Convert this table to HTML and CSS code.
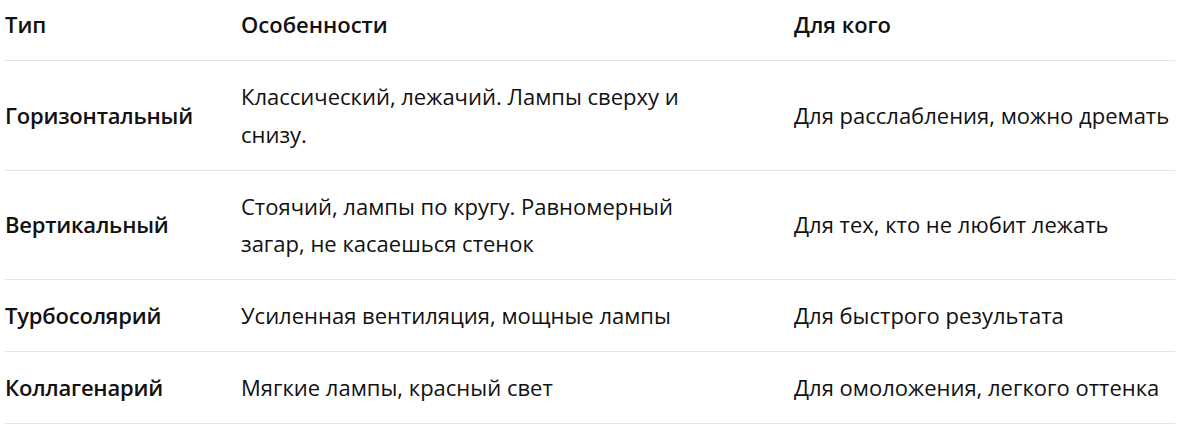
FILE: index.html
```html
<!DOCTYPE html>
<html lang="ru">
<head>
<meta charset="utf-8">
<link rel="stylesheet" href="styles.css">
</head>
<body>
<table class="tbl">
  <thead>
    <tr>
      <th class="c1">Тип</th>
      <th class="c2">Особенности</th>
      <th class="c3">Для кого</th>
    </tr>
  </thead>
  <tbody>
    <tr>
      <td class="c1 name">Горизонтальный</td>
      <td class="c2"><span class="wrap">Классический, лежачий. Лампы сверху и снизу.</span></td>
      <td class="c3">Для расслабления, можно дремать</td>
    </tr>
    <tr>
      <td class="c1 name">Вертикальный</td>
      <td class="c2"><span class="wrap">Стоячий, лампы по кругу. Равномерный загар, не касаешься стенок</span></td>
      <td class="c3">Для тех, кто не любит лежать</td>
    </tr>
    <tr>
      <td class="c1 name">Турбосолярий</td>
      <td class="c2"><span class="wrap">Усиленная вентиляция, мощные лампы</span></td>
      <td class="c3">Для быстрого результата</td>
    </tr>
    <tr>
      <td class="c1 name">Коллагенарий</td>
      <td class="c2"><span class="wrap">Мягкие лампы, красный свет</span></td>
      <td class="c3">Для омоложения, легкого оттенка</td>
    </tr>
  </tbody>
</table>
</body>
</html>
```

FILE: styles.css
```css
html, body {
  margin: 0;
  padding: 0;
  background: #ffffff;
}
body {
  padding: 0 25px 0 5px;
  font-family: "Open Sans", "Noto Sans", "Liberation Sans", sans-serif;
  font-size: 22px;
  color: #111111;
}
.tbl {
  border-collapse: collapse;
  width: 1170px;
  table-layout: fixed;
}
.tbl th, .tbl td {
  text-align: left;
  vertical-align: middle;
  padding: 17px 0 16.5px;
  line-height: 37.5px;
}
.tbl th {
  font-weight: 600;
  padding: 6px 0 16.5px;
}
.tbl tbody td {
  border-top: 1px solid #e3e3e3;
}
.tbl tbody tr:last-child td {
  border-bottom: 1px solid #e3e3e3;
}
.c1 { width: 236px; }
.c2 { width: 553px; }
.c3 { width: 381px; white-space: nowrap; }
.name { font-weight: 600; letter-spacing: -0.2px; }
.wrap {
  display: block;
  max-width: 470px;
}
```
